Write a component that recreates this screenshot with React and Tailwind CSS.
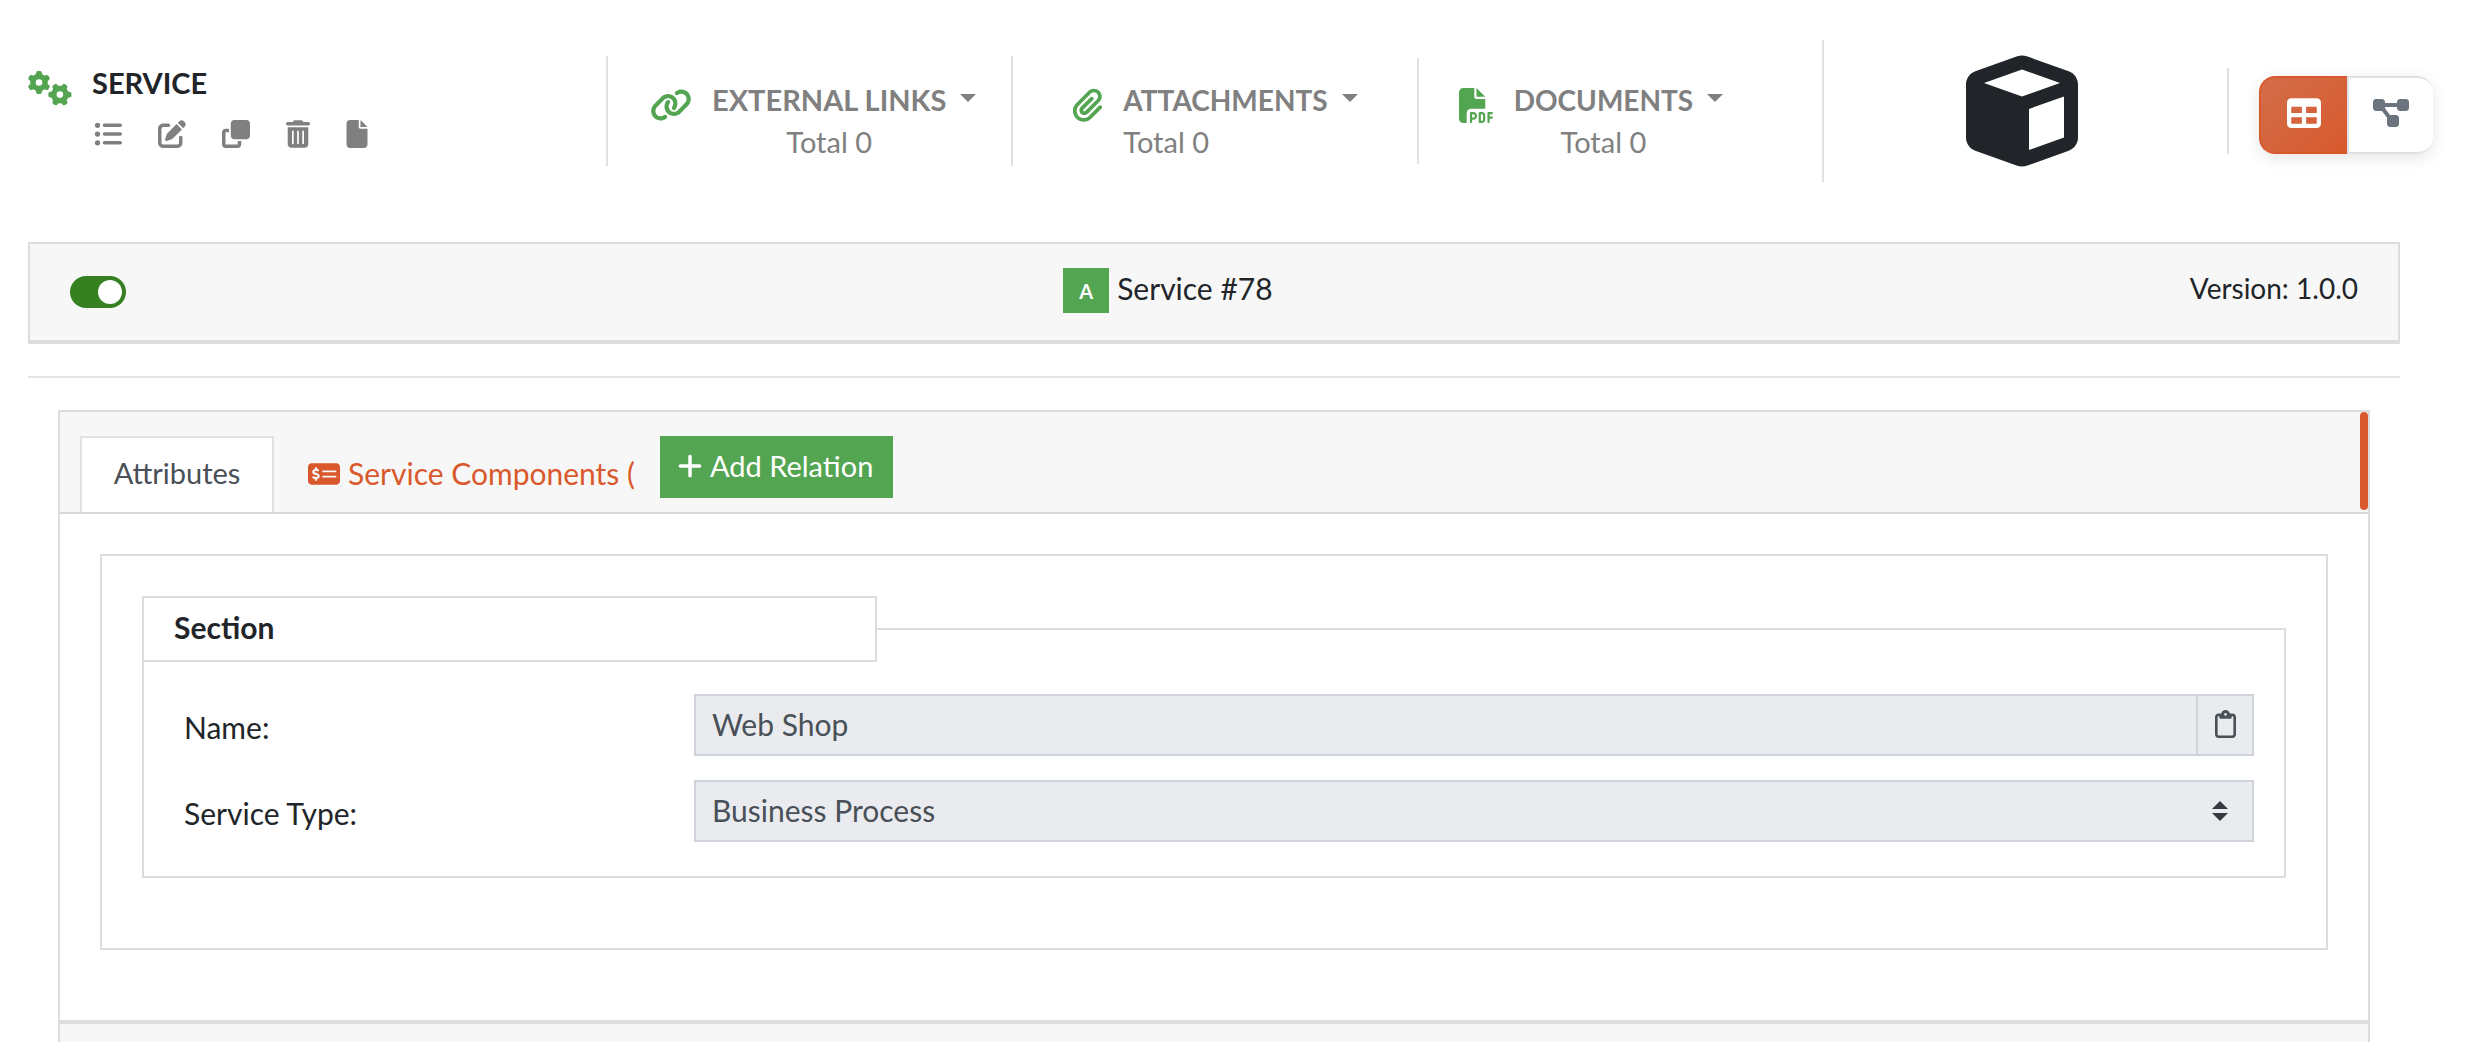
import {
  FaGears, FaListUl, FaPenToSquare, FaClone, FaTrashCan, FaFile, FaLink, FaPaperclip,
  FaFilePdf, FaCube, FaTable, FaDiagramProject, FaMoneyCheckDollar, FaPlus, FaRegClipboard,
} from "react-icons/fa6";

const actions = [
  { label: "List", Icon: FaListUl, size: "size-7" },
  { label: "Edit", Icon: FaPenToSquare, size: "size-7" },
  { label: "Clone", Icon: FaClone, size: "size-7" },
  { label: "Delete", Icon: FaTrashCan, size: "h-7 w-6" },
  { label: "File", Icon: FaFile, size: "h-7 w-[22px]" },
];

const resources = [
  { title: "EXTERNAL LINKS", Icon: FaLink, icon: "h-[34px] w-[42px]", cell: "pl-[42px] h-[110px]", text: "text-[29px]", total: "pr-[30px] text-center" },
  { title: "ATTACHMENTS", Icon: FaPaperclip, icon: "h-[34px] w-[31px]", cell: "pl-[59px] h-[106px]", text: "text-[28px]", total: "text-left" },
  { title: "DOCUMENTS", Icon: FaFilePdf, icon: "size-[35px]", cell: "pl-10 h-[142px]", text: "text-[28px]", total: "pr-[30px] text-center" },
];

function Resource({ title, Icon, icon, cell, text, total }) {
  return (
    <div className={`col-span-2 flex items-center gap-5 border-r-2 border-[#dee2e6] ${cell}`}>
      <Icon className={`mb-3 shrink-0 text-[#53a551] ${icon}`} />
      <div className="pt-5 text-[#808080]">
        <button type="button" className={`flex items-center gap-3.5 font-bold whitespace-nowrap ${text}`}>
          {title}
          <svg viewBox="0 0 16 8" className="mb-1 h-2 w-4" fill="currentColor" aria-hidden="true">
            <path d="M0 0h16L8 8z" />
          </svg>
        </button>
        <p className={`text-[29px] ${total}`}>Total 0</p>
      </div>
    </div>
  );
}

function Header() {
  return (
    <header className="mr-[44px] grid grid-cols-12 items-center">
      <div className="col-span-3 flex h-[110px] gap-5 border-r-2 border-[#e0e0e0] pl-7">
        <FaGears className="mt-3.5 h-[36px] w-[44px] text-[#53a551]" />
        <div className="pt-1.5">
          <h1 className="text-[29px] font-bold text-[#212529]">SERVICE</h1>
          <div className="mt-4 flex gap-9 pl-0.5 text-[#808080]">
            {actions.map(({ label, Icon, size }) => (
              <button key={label} type="button" aria-label={label}>
                <Icon className={size} />
              </button>
            ))}
          </div>
        </div>
      </div>
      {resources.map((r) => (
        <Resource key={r.title} {...r} />
      ))}
      <div className="col-span-2 flex h-[86px] items-center justify-center border-r-2 border-[#e0e0e0] pr-2">
        <FaCube className="size-28 shrink-0 text-[#212529]" />
      </div>
      <div className="flex h-[86px] items-center pl-[30px]">
        <div className="mt-2 flex rounded-2xl shadow-[0_4px_16px_rgba(0,0,0,0.1)]">
          <button
            type="button"
            aria-label="Table view"
            className="flex h-[78px] w-[88px] items-center justify-center rounded-l-2xl border-2 border-r-0 border-[#d9592d] bg-linear-135 from-[#d26d48] to-[#d9592d] text-white"
          >
            <FaTable className="mb-1 size-[34px]" />
          </button>
          <button
            type="button"
            aria-label="Diagram view"
            className="flex h-[78px] w-[86px] items-center justify-center rounded-r-2xl border-y-2 border-l-2 border-[#dee2e6] bg-white text-[#6c757d]"
          >
            <FaDiagramProject className="mb-1 h-8 w-9" />
          </button>
        </div>
      </div>
    </header>
  );
}

function StatusBar() {
  return (
    <div className="mt-[60px] flex h-[102px] items-start justify-between border-2 border-b-4 border-[#dddddd] bg-[#f7f7f7] px-10 pt-6">
      <label className="relative mt-2 h-8 w-14">
        <input
          type="checkbox"
          role="switch"
          aria-label="Active"
          defaultChecked
          className="peer block h-8 w-14 appearance-none rounded-full bg-[#adb5bd] checked:bg-[#378021]"
        />
        <span className="absolute top-1 left-1 size-6 rounded-full bg-white peer-checked:right-1 peer-checked:left-auto" />
      </label>
      <div className="ml-5 flex gap-2">
        <span className="flex h-[45px] w-[46px] items-center justify-center bg-[#53a551] text-xl font-bold text-white">A</span>
        <span className="leading-10">Service #78</span>
      </div>
      <p className="text-right text-[28px] leading-10">Version: 1.0.0</p>
    </div>
  );
}

function Tabs() {
  return (
    <div className="flex border-b-2 border-[#d8d8d8] bg-[#f7f7f7] pl-5">
      <button type="button" className="mt-6 h-[76px] w-[194px] border-2 border-b-0 border-[#dee2e6] bg-white pb-1 text-[29px] text-[#495057]">
        Attributes
      </button>
      <a href="#components" className="mt-6 ml-[34px] flex h-[76px] w-[326px] items-center gap-2 overflow-hidden whitespace-nowrap text-[#d9592d]">
        <FaMoneyCheckDollar className="size-8 shrink-0" />
        <span className="pb-0.5">Service Components (</span>
      </a>
      <button type="button" className="mt-6 ml-[26px] flex h-[62px] items-center gap-1.5 bg-[#53a551] pr-5 pl-4 pb-0.5 text-[29px] whitespace-nowrap text-white">
        <FaPlus className="size-7" />
        Add Relation
      </button>
      <div className="mb-0.5 ml-auto w-2 rounded-full bg-[#d9592d]" />
    </div>
  );
}

function SectionFields() {
  return (
    <fieldset className="border-2 border-[#dddddd] px-[30px] pb-[34px]">
      <legend className="-ml-8 h-[66px] w-[735px] max-w-full border-2 border-[#dddddd] bg-white px-[30px] pt-2 font-bold">
        Section
      </legend>
      <div className="mt-8 grid grid-cols-4 gap-y-6">
        <label htmlFor="name" className="pt-3 pl-2.5">Name:</label>
        <div className="col-span-3 flex h-[62px] border-2 border-[#ced4da] bg-[#e9ebef] text-[#495057]">
          <input id="name" readOnly defaultValue="Web Shop" className="min-w-0 flex-1 bg-transparent px-4 pb-0.5 outline-none" />
          <button type="button" aria-label="Copy" className="flex w-14 items-center justify-center border-l-2 border-[#ced4da] pb-0.5">
            <FaRegClipboard className="h-7 w-[21px]" />
          </button>
        </div>
        <label htmlFor="type" className="pt-3 pl-2.5">Service Type:</label>
        <div className="relative col-span-3">
          <select id="type" className="block h-[62px] w-full appearance-none border-2 border-[#ced4da] bg-[#e9ebef] px-4 pb-0.5 text-[#495057]">
            <option>Business Process</option>
          </select>
          <svg viewBox="0 0 16 20" className="pointer-events-none absolute top-[21px] right-[26px] h-5 w-4" fill="#343a40" aria-hidden="true">
            <path d="M0 8h16L8 0zM0 12h16l-8 8z" />
          </svg>
        </div>
      </div>
    </fieldset>
  );
}

export default function App() {
  return (
    <div className="flex min-h-screen flex-col bg-white pt-10 font-[Lato,'Open_Sans',sans-serif] text-[30px] leading-[42px] text-[#212529]">
      <Header />
      <main className="mr-[76px] ml-7 flex flex-1 flex-col">
        <StatusBar />
        <hr className="mt-8 border-t-2 border-[#e5e5e5]" />
        <section className="mx-[30px] mt-8 flex flex-1 flex-col border-2 border-b-0 border-[#dddddd]">
          <Tabs />
          <div className="mx-10 mt-10 mb-[70px] border-2 border-[#dddddd] px-10 pt-10 pb-[70px]">
            <SectionFields />
          </div>
          <footer className="flex-1 border-t-4 border-[#dddddd] bg-[#f7f7f7]" />
        </section>
      </main>
    </div>
  );
}
